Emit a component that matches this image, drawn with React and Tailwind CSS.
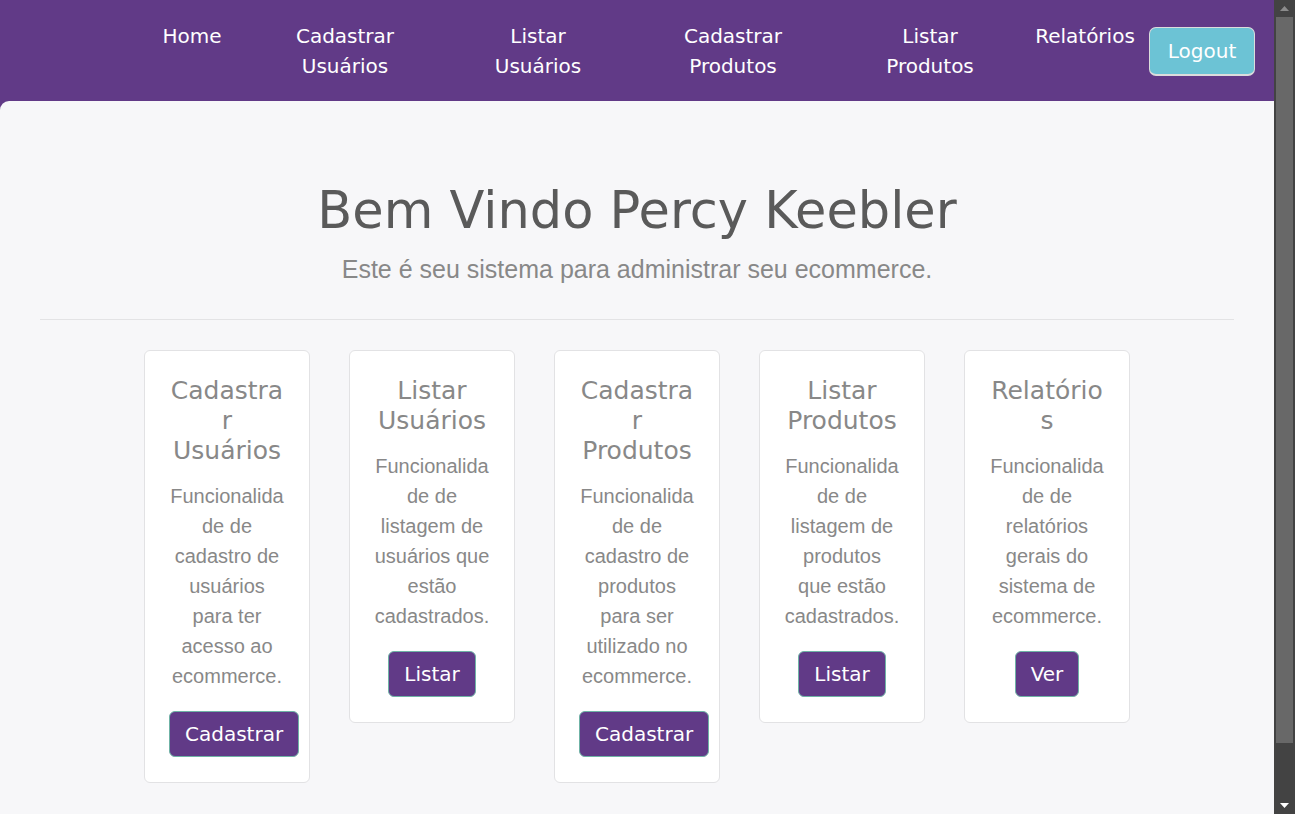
const navItems = [
  { lines: ['Home'], w: 'w-[124px]' },
  { lines: ['Cadastrar', 'Usuários'], w: 'w-[182px]' },
  { lines: ['Listar', 'Usuários'], w: 'w-[204px]' },
  { lines: ['Cadastrar', 'Produtos'], w: 'w-[186px]' },
  { lines: ['Listar', 'Produtos'], w: 'w-[208px]' },
  { lines: ['Relatórios'], w: 'w-[102px]' },
];

const cards = [
  {
    title: 'Cadastrar Usuários',
    text: 'Funcionalidade de cadastro de usuários para ter acesso ao ecommerce.',
    action: 'Cadastrar',
  },
  {
    title: 'Listar Usuários',
    text: 'Funcionalidade de listagem de usuários que estão cadastrados.',
    action: 'Listar',
  },
  {
    title: 'Cadastrar Produtos',
    text: 'Funcionalidade de cadastro de produtos para ser utilizado no ecommerce.',
    action: 'Cadastrar',
  },
  {
    title: 'Listar Produtos',
    text: 'Funcionalidade de listagem de produtos que estão cadastrados.',
    action: 'Listar',
  },
  {
    title: 'Relatórios',
    text: 'Funcionalidade de relatórios gerais do sistema de ecommerce.',
    action: 'Ver',
  },
];

const heading = "font-['DejaVu_Sans','Noto_Sans',sans-serif]";
const body = "font-['Liberation_Sans',Arial,sans-serif]";

function Card({ title, text, action }) {
  return (
    <div className="w-[166px] shrink-0 break-words rounded-[6px] border border-[#e2e2e4] bg-white px-6 py-[25px] text-center">
      <h5 className={`${heading} mb-[15px] text-[25px] leading-[30px] text-[#888888]`}>{title}</h5>
      <p className={`${body} mb-5 text-[20px] leading-[30px] text-[#888888]`}>{text}</p>
      <button
        className={`${heading} inline-block h-[46px] whitespace-nowrap rounded-[6px] border border-[#6fb3a6] bg-[#613a87] px-[15px] text-[20px] leading-[30px] text-white`}
      >
        {action}
      </button>
    </div>
  );
}

// the browser scrollbar from the screenshot (dark theme)
function Scrollbar() {
  return (
    <div className="flex h-screen w-[21px] shrink-0 flex-col bg-[#434343]">
      <div className="flex h-[17px] items-center justify-center">
        <svg width="9" height="5" viewBox="0 0 9 5">
          <path d="M0 5 L4.5 0 L9 5 Z" fill="#8c8c8c" />
        </svg>
      </div>
      <div className="flex-1 px-[2px]">
        <div className="h-[726px] bg-[#686868]" />
      </div>
      <div className="flex h-[17px] items-center justify-center">
        <svg width="9" height="5" viewBox="0 0 9 5">
          <path d="M0 0 L9 0 L4.5 5 Z" fill="#ffffff" />
        </svg>
      </div>
    </div>
  );
}

export default function App() {
  return (
    <div className="flex h-screen overflow-hidden bg-[#613a87]">
      <div className="min-w-0 flex-1">
        <nav className={`${heading} flex h-[101px] items-start pt-[21px] text-[20px] leading-[30px] text-white`}>
          <div className="ml-[130px] flex">
            {navItems.map((item, i) => (
              <a key={i} className={`${item.w} text-center`}>
                {item.lines.map((l, j) => (
                  <div key={j}>{l}</div>
                ))}
              </a>
            ))}
          </div>
          <button className="ml-[13px] mt-[6px] h-[49px] w-[106px] rounded-[7px] border border-b-2 border-[#dcdcdc] bg-[#6cc3d5] text-[20px] text-white">
            Logout
          </button>
        </nav>

        <main className="rounded-tl-[9px] bg-[#f7f7f9] px-10 pb-[90px] pt-20 text-center">
          <h1 className={`${heading} mb-[10px] text-[51px] leading-[60px] text-[#5a5a5a]`}>
            Bem Vindo Percy Keebler
          </h1>
          <p className={`${body} text-[25px] font-light leading-[37.5px] text-[#888888]`}>
            Este é seu sistema para administrar seu ecommerce.
          </p>
          <hr className="my-[30px] border-t border-[#e3e3e5]" />
          <div className="flex items-start justify-center gap-[39px]">
            {cards.map((c, i) => (
              <Card key={i} {...c} />
            ))}
          </div>
        </main>
      </div>
      <Scrollbar />
    </div>
  );
}
